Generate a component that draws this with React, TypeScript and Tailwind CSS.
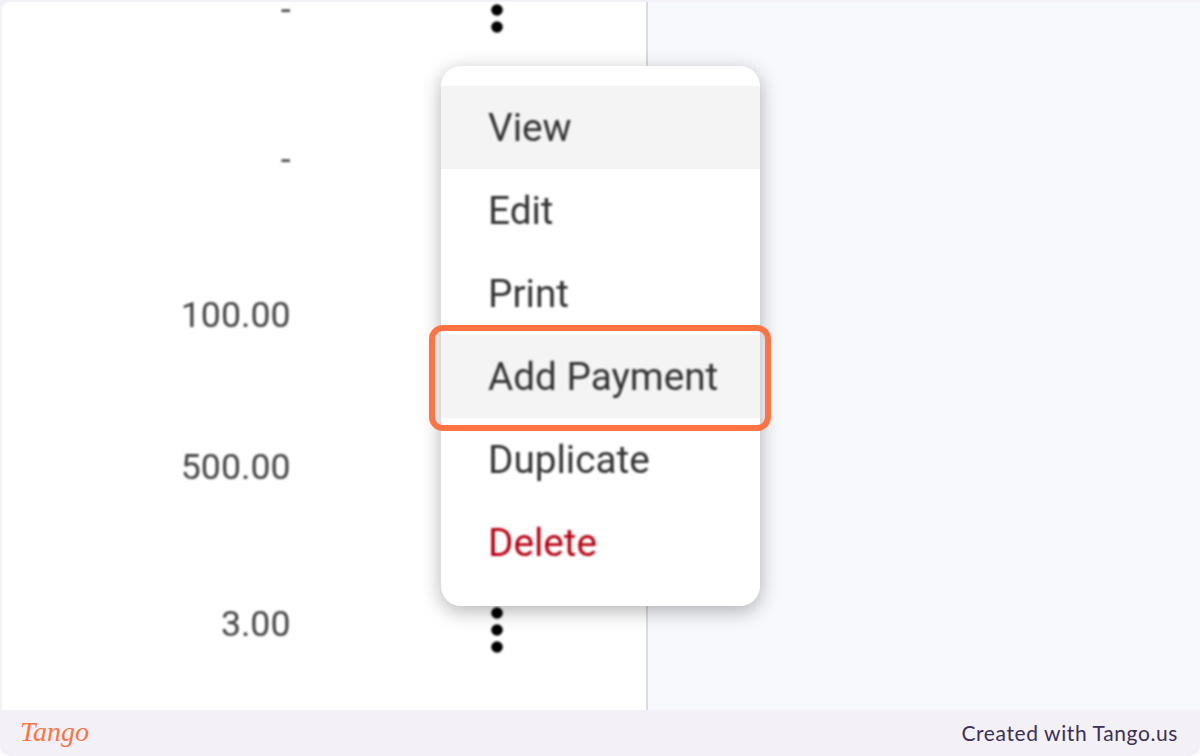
import React from 'react';

const rows = [
  { amount: '-', shift: 'leading-[12px] -translate-y-[1px]' },
  { amount: '-', shift: 'leading-none -translate-y-[5px]' },
  { amount: '100.00', shift: 'leading-none -translate-y-[4px]' },
  { amount: '500.00', shift: 'leading-none -translate-y-[7px]' },
  { amount: '3.00', shift: 'leading-none -translate-y-[5px]' },
];
const menuItems = ['View', 'Edit', 'Print', 'Add Payment', 'Duplicate', 'Delete'];

const Dots = () => (
  <svg width="14" height="48" viewBox="0 0 14 48" fill="#000">
    <circle cx="7" cy="7" r="5.8" />
    <circle cx="7" cy="24" r="5.8" />
    <circle cx="7" cy="41" r="5.8" />
  </svg>
);

const App = () => {
  return (
    <div className="relative w-[1200px] h-[756px] overflow-hidden bg-[#f3f1f7] rounded-b-[10px] flex flex-col font-['Roboto',sans-serif]">
      <div className="h-[710px] pt-[2px] pl-[2px] flex">
        <div className="w-[646px] overflow-hidden bg-white border-r-2 border-[#dcdcdc] rounded-tl-[8px]">
          <div className="-mt-[70px] blur-[0.9px]">
            {rows.map((row, i) => (
              <div key={i} className="h-[155px] flex items-center">
                <div className={`w-[288.5px] text-right text-[35.7px] text-[#444] ${row.shift}`}>
                  {row.amount}
                </div>
                <div className="ml-[199.5px]">
                  <Dots />
                </div>
              </div>
            ))}
          </div>
        </div>
        <div className="flex-1 bg-[#f8f9fd]" />
      </div>

      <div className="flex-1 flex items-center justify-between pl-[20px] pr-[22px]">
        <div className="relative -top-[1px] text-[#ff7442] text-[28px] leading-none italic font-['Liberation_Serif',serif]">
          Tango
        </div>
        <div className="relative -top-[1px] text-[21px] leading-none tracking-[0.6px] text-[#3d2f57] font-['Lato',sans-serif]">
          Created with Tango.us
        </div>
      </div>

      {/* dropdown */}
      <div className="absolute left-[441px] top-[66px] w-[319px] h-[540px] bg-white rounded-[20px] py-[20px] shadow-[0_5px_20px_rgba(0,0,0,0.3)]">
        {menuItems.map((item) => (
          <div
            key={item}
            className={`h-[83px] flex items-center pl-[47px] ${
              item === 'View' || item === 'Add Payment' ? 'bg-[#f4f4f4]' : ''
            }`}
          >
            <span
              className={`text-[38.7px] leading-none translate-y-[1px] blur-[0.9px] ${
                item === 'Delete' ? 'text-[#b80010]' : 'text-[#333]'
              }`}
            >
              {item}
            </span>
          </div>
        ))}
      </div>

      {/* highlight around Add Payment */}
      <div className="absolute left-[429px] top-[325px] w-[342px] h-[106px] border-[6px] border-[#ff7442] rounded-[14px]" />
    </div>
  );
};

export default App;
